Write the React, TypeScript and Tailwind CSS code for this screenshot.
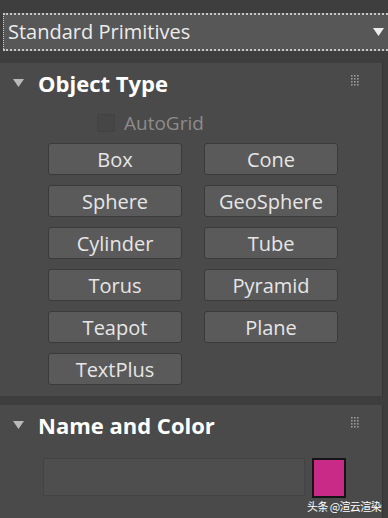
import React from 'react';

const buttons: [string, string | null][] = [
  ['Box', 'Cone'],
  ['Sphere', 'GeoSphere'],
  ['Cylinder', 'Tube'],
  ['Torus', 'Pyramid'],
  ['Teapot', 'Plane'],
  ['TextPlus', null],
];

function Caret() {
  return (
    <svg width="11" height="8" viewBox="0 0 11 8" className="shrink-0">
      <path d="M0 0 L11 0 L5.5 8 Z" fill="#b9b9b9" />
    </svg>
  );
}

function Grip() {
  const dots = [];
  for (let r = 0; r < 4; r++)
    for (let c = 0; c < 3; c++) dots.push(<rect key={r + '-' + c} x={c * 3} y={r * 3} width="1.6" height="1.6" fill="#9a9a9a" />);
  return (
    <svg width="9" height="12" viewBox="0 0 9 12">
      {dots}
    </svg>
  );
}

function RollHeader({ title }: { title: string }) {
  return (
    <div className="flex items-center h-[38px] pl-[13px] pr-[22px]">
      <Caret />
      <span className="ml-[14px] text-[22px] font-bold text-white">{title}</span>
      <div className="ml-auto mt-[-4px]">
        <Grip />
      </div>
    </div>
  );
}

function Btn({ label }: { label: string }) {
  return (
    <button className="w-[134px] h-[32px] pt-[2px] rounded-[3px] bg-[#5a5a5a] border border-[#3a3a3a] text-[#e6e6e6] text-[20px] leading-none flex items-center justify-center">
      {label}
    </button>
  );
}

export default function App() {
  return (
    <div className="w-[388px] h-[518px] bg-[#3e3e3e] overflow-hidden font-['Open_Sans',sans-serif]">
      {/* dropdown */}
      <div className="pt-[13px]">
        <div className="h-[38px] bg-[#575757] border-y-2 border-l border-dotted border-[#c8c8c8] ml-[3px] flex items-center pl-[4px] pr-[4px]">
          <span className="text-[20px] text-[#ececec]">Standard Primitives</span>
          <svg width="11" height="8" viewBox="0 0 11 8" className="ml-auto">
            <path d="M0 0 L11 0 L5.5 8 Z" fill="#ededed" />
          </svg>
        </div>
      </div>

      {/* Object Type */}
      <div className="mt-[12px] w-[383px] bg-[#4a4a4a] border-r border-[#353535] pt-[1px] pb-[11px]">
        <RollHeader title="Object Type" />
        <div className="flex items-center ml-[97px] mt-[10px] h-[22px]">
          <div className="w-[18px] h-[18px] bg-[#464646] border border-[#424242] rounded-[2px]" />
          <span className="ml-[9px] text-[19px] text-[#8c8c8c]">AutoGrid</span>
        </div>
        <div className="mt-[9px] ml-[48px] grid grid-cols-[134px_134px] gap-x-[22px] gap-y-[10px]">
          {buttons.map(([a, b]) => (
            <React.Fragment key={a}>
              <Btn label={a} />
              {b ? <Btn label={b} /> : <div />}
            </React.Fragment>
          ))}
        </div>
      </div>

      {/* Name and Color */}
      <div className="mt-[9px] w-[383px] h-[120px] bg-[#4a4a4a] border-r border-[#353535] pt-[1px]">
        <RollHeader title="Name and Color" />
        <div className="flex items-start ml-[43px] mt-[14px]">
          <div className="w-[262px] h-[38px] bg-[#4e4e4e] border border-[#434343]" />
          <div className="relative ml-[7px]">
            <div className="w-[34px] h-[40px] bg-[#c92a87] border-2 border-[#151515]" />
            <span className="absolute left-[-5px] top-[40px] whitespace-nowrap text-[11px] tracking-[-0.6px] text-white font-['Noto_Sans_CJK_SC',sans-serif]">
              头条 @渲云渲染
            </span>
          </div>
        </div>
      </div>
    </div>
  );
}
